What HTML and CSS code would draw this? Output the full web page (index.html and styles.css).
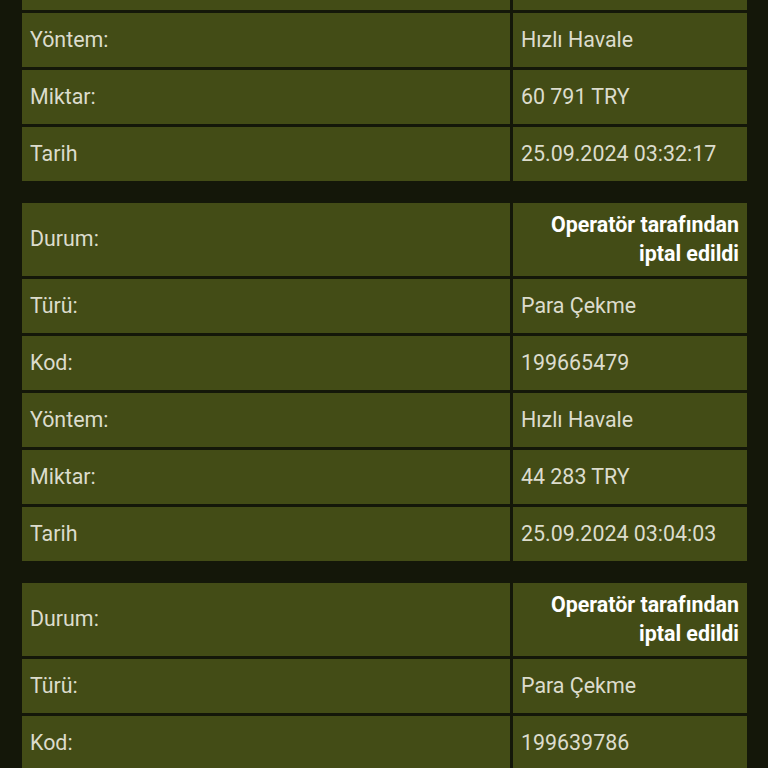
FILE: index.html
```html
<!DOCTYPE html>
<html lang="tr">
<head>
<meta charset="utf-8">
<link rel="stylesheet" href="styles.css">
</head>
<body>
<div class="list">
  <table class="tx">
    <tr class="status"><td class="label">Durum:</td><td class="value strong">Operatör tarafından iptal edildi</td></tr>
    <tr><td class="label">Türü:</td><td class="value">Para Çekme</td></tr>
    <tr><td class="label">Kod:</td><td class="value">199671203</td></tr>
    <tr><td class="label">Yöntem:</td><td class="value">Hızlı Havale</td></tr>
    <tr><td class="label">Miktar:</td><td class="value">60 791 TRY</td></tr>
    <tr><td class="label">Tarih</td><td class="value">25.09.2024 03:32:17</td></tr>
  </table>
  <table class="tx">
    <tr class="status"><td class="label">Durum:</td><td class="value strong">Operatör tarafından iptal edildi</td></tr>
    <tr><td class="label">Türü:</td><td class="value">Para Çekme</td></tr>
    <tr><td class="label">Kod:</td><td class="value">199665479</td></tr>
    <tr><td class="label">Yöntem:</td><td class="value">Hızlı Havale</td></tr>
    <tr><td class="label">Miktar:</td><td class="value">44 283 TRY</td></tr>
    <tr><td class="label">Tarih</td><td class="value">25.09.2024 03:04:03</td></tr>
  </table>
  <table class="tx">
    <tr class="status"><td class="label">Durum:</td><td class="value strong">Operatör tarafından iptal edildi</td></tr>
    <tr><td class="label">Türü:</td><td class="value">Para Çekme</td></tr>
    <tr><td class="label">Kod:</td><td class="value">199639786</td></tr>
    <tr><td class="label">Yöntem:</td><td class="value">Hızlı Havale</td></tr>
    <tr><td class="label">Miktar:</td><td class="value">50 000 TRY</td></tr>
    <tr><td class="label">Tarih</td><td class="value">25.09.2024 02:41:10</td></tr>
  </table>
</div>
</body>
</html>
```
FILE: styles.css
```css
html, body {
  margin: 0;
  padding: 0;
  background: #141709;
  overflow: hidden;
}
body {
  font-family: Roboto, "Noto Sans", sans-serif;
  font-size: 21.4px;
  color: #dcdccd;
}
.list {
  margin-top: -180px;
  padding: 0 18px 0 19px;
}
.tx {
  border-collapse: separate;
  border-spacing: 3px;
  width: 731px;
  margin-bottom: 16px;
  table-layout: fixed;
}
.tx td {
  background: #434c16;
  height: 54px;
  padding: 0 8px;
  vertical-align: middle;
  line-height: 28.5px;
  box-sizing: border-box;
}
.tx td.label {
  width: 488px;
}
.tx td.value {
  width: 234px;
}
.tx .status td {
  height: 73px;
  padding: 8px 8px;
}
.tx td.strong {
  font-weight: 700;
  color: #ffffff;
  text-align: right;
}
```
